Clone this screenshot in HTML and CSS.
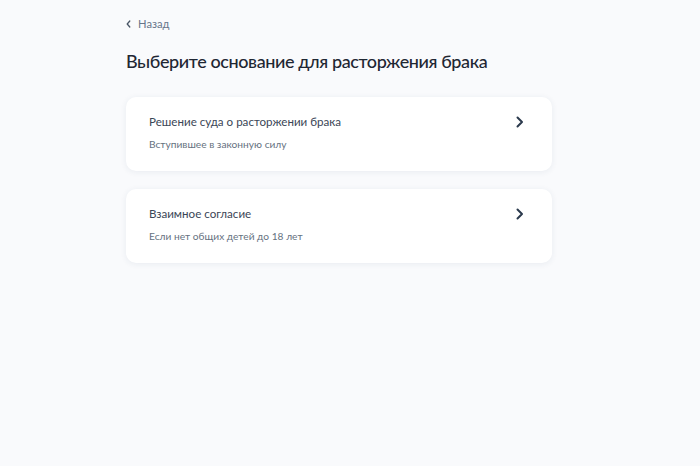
FILE: index.html
```html
<!DOCTYPE html>
<html lang="ru">
<head>
<meta charset="utf-8">
<link rel="stylesheet" href="styles.css">
</head>
<body>
<div class="page">
  <a class="back" href="#">
    <svg class="back-icon" width="5" height="8" viewBox="0 0 5 8"><path d="M3.8 1 L1.2 4 L3.8 7" fill="none" stroke="#4a5666" stroke-width="1.3" stroke-linecap="round" stroke-linejoin="round"/></svg>
    <span>Назад</span>
  </a>
  <h1 class="title">Выберите основание для расторжения брака</h1>
  <div class="list">
    <a class="card" href="#">
      <div class="card-text">
        <div class="card-title">Решение суда о расторжении брака</div>
        <div class="card-sub">Вступившее в законную силу</div>
      </div>
      <svg class="chev" width="8" height="12" viewBox="0 0 8 12"><path d="M1.5 1.5 L6 6 L1.5 10.5" fill="none" stroke="#2b3a4d" stroke-width="2" stroke-linecap="round" stroke-linejoin="round"/></svg>
    </a>
    <a class="card" href="#">
      <div class="card-text">
        <div class="card-title">Взаимное согласие</div>
        <div class="card-sub">Если нет общих детей до 18 лет</div>
      </div>
      <svg class="chev" width="8" height="12" viewBox="0 0 8 12"><path d="M1.5 1.5 L6 6 L1.5 10.5" fill="none" stroke="#2b3a4d" stroke-width="2" stroke-linecap="round" stroke-linejoin="round"/></svg>
    </a>
  </div>
</div>
</body>
</html>
```
FILE: styles.css
```css
html, body {
  margin: 0;
  padding: 0;
}
body {
  background: #f9fafc;
  font-family: Lato, "Open Sans", "Liberation Sans", sans-serif;
  width: 700px;
  height: 466px;
  overflow: hidden;
}
.page {
  width: 426px;
  margin-left: 126px;
  padding-top: 17px;
}
.back {
  display: flex;
  align-items: center;
  gap: 7px;
  text-decoration: none;
  color: #66758a;
  font-size: 11.2px;
  line-height: 14px;
}
.back-icon {
  display: block;
}
.title {
  margin: 18px 0 0;
  font-size: 18px;
  font-weight: 500;
  line-height: 24px;
  color: #1f2733;
  letter-spacing: -0.4px;
}
.list {
  margin-top: 24px;
  display: flex;
  flex-direction: column;
  gap: 18px;
}
.card {
  display: flex;
  align-items: flex-start;
  justify-content: space-between;
  height: 74px;
  box-sizing: border-box;
  padding: 17px 28px 0 23px;
  background: #ffffff;
  border-radius: 10px;
  box-shadow: 0 1px 6px rgba(40, 60, 100, 0.08);
  text-decoration: none;
}
.card-title {
  font-size: 11.6px;
  line-height: 16px;
  color: #3b4656;
}
.card-sub {
  margin-top: 8px;
  font-size: 10.2px;
  line-height: 13px;
  color: #66727f;
}
.chev {
  display: block;
  margin-top: 2px;
}
```
